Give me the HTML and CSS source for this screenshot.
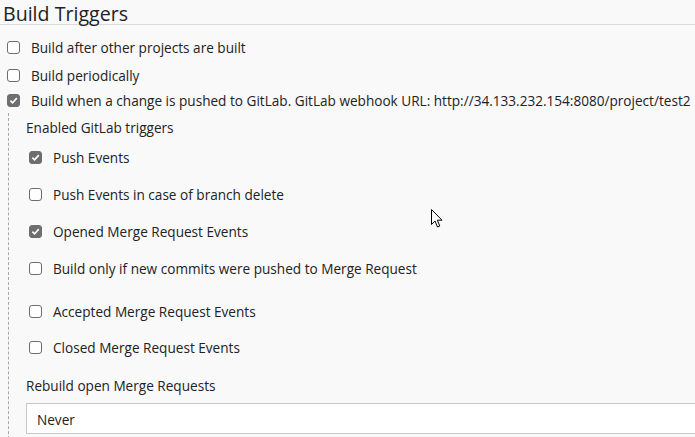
FILE: index.html
```html
<!DOCTYPE html>
<html>
<head>
<meta charset="utf-8">
<link rel="stylesheet" href="styles.css">
</head>
<body>
<div class="page">
  <h2 class="section-title">Build Triggers</h2>
  <div class="top-row r1"><span class="cb"></span><span class="lbl">Build after other projects are built</span></div>
  <div class="top-row r2"><span class="cb"></span><span class="lbl">Build periodically</span></div>
  <div class="top-row r3"><span class="cb checked"><svg viewBox="0 0 12 12"><path d="M2.6 6.2 L5 8.6 L9.6 3.4" fill="none" stroke="#fff" stroke-width="1.8"/></svg></span><span class="lbl">Build when a change is pushed to GitLab. GitLab webhook URL: http://34.133.232.154:8080/project/test2</span></div>
  <div class="nested">
    <div class="sub-title">Enabled GitLab triggers</div>
    <div class="in-row i1"><span class="cb checked"><svg viewBox="0 0 12 12"><path d="M2.6 6.2 L5 8.6 L9.6 3.4" fill="none" stroke="#fff" stroke-width="1.8"/></svg></span><span class="lbl">Push Events</span></div>
    <div class="in-row i2"><span class="cb"></span><span class="lbl">Push Events in case of branch delete</span></div>
    <div class="in-row i3"><span class="cb checked"><svg viewBox="0 0 12 12"><path d="M2.6 6.2 L5 8.6 L9.6 3.4" fill="none" stroke="#fff" stroke-width="1.8"/></svg></span><span class="lbl">Opened Merge Request Events</span></div>
    <div class="in-row i4"><span class="cb"></span><span class="lbl">Build only if new commits were pushed to Merge Request</span></div>
    <div class="in-row i5"><span class="cb"></span><span class="lbl">Accepted Merge Request Events</span></div>
    <div class="in-row i6"><span class="cb"></span><span class="lbl">Closed Merge Request Events</span></div>
    <div class="sub-title rebuild">Rebuild open Merge Requests</div>
    <div class="select">Never</div>
  </div>
  <svg class="cursor" width="13" height="20" viewBox="0 0 13 20"><path d="M0.5 0.5 L0.5 15.5 L4 12 L6.5 18 L8.8 17 L6.3 11.2 L11 11.2 Z" fill="#fff" stroke="#000" stroke-width="1" stroke-linejoin="miter"/></svg>
</div>
</body>
</html>
```
FILE: styles.css
```css
html, body {
  margin: 0;
  padding: 0;
  background: #f9f9f9;
}
.page {
  position: relative;
  width: 695px;
  height: 437px;
  overflow: hidden;
  font-family: "Open Sans", "Noto Sans", sans-serif;
  font-size: 13.6px;
  color: #222;
}
.section-title {
  margin: 0;
  padding: 0 0 0 3px;
  height: 24px;
  line-height: 27px;
  font-size: 19.6px;
  font-weight: normal;
  color: #222;
  border-bottom: 1px solid #dcdcdc;
  overflow: visible;
}
.top-row {
  display: flex;
  align-items: center;
  height: 18px;
  padding-left: 7px;
}
.r1 { margin-top: 13px; }
.r2 { margin-top: 10px; }
.r3 { margin-top: 7px; }
.cb {
  box-sizing: border-box;
  width: 13px;
  height: 13px;
  border: 1px solid #6d6d6d;
  border-radius: 3px;
  background: #fff;
  flex: none;
  display: flex;
  align-items: center;
  justify-content: center;
}
.cb.checked {
  background: #6e6e6e;
  border-color: #6e6e6e;
}
.cb svg { width: 11px; height: 11px; }
.lbl {
  margin-left: 11px;
  white-space: nowrap;
}
.nested {
  margin-left: 8px;
  margin-top: 4px;
  border-left: 1px dashed #a8a8a8;
  padding-left: 17px;
  padding-top: 6px;
  height: 330px;
}
.sub-title {
  height: 18px;
  line-height: 18px;
  white-space: nowrap;
}
.in-row {
  display: flex;
  align-items: center;
  height: 18px;
  padding-left: 3px;
}
.in-row .lbl { margin-left: 11px; }
.i1 { margin-top: 11px; }
.i2 { margin-top: 19px; }
.i3 { margin-top: 19px; }
.i4 { margin-top: 19px; }
.i5 { margin-top: 25px; }
.i6 { margin-top: 18px; }
.rebuild { margin-top: 21px; }
.select {
  margin-top: 8px;
  height: 31px;
  box-sizing: border-box;
  border: 1px solid #c8c8c8;
  background: #fff;
  padding: 3px 0 0 10px;
  line-height: 26px;
  width: 700px;
}
.cursor {
  position: absolute;
  left: 431px;
  top: 209px;
}
```
